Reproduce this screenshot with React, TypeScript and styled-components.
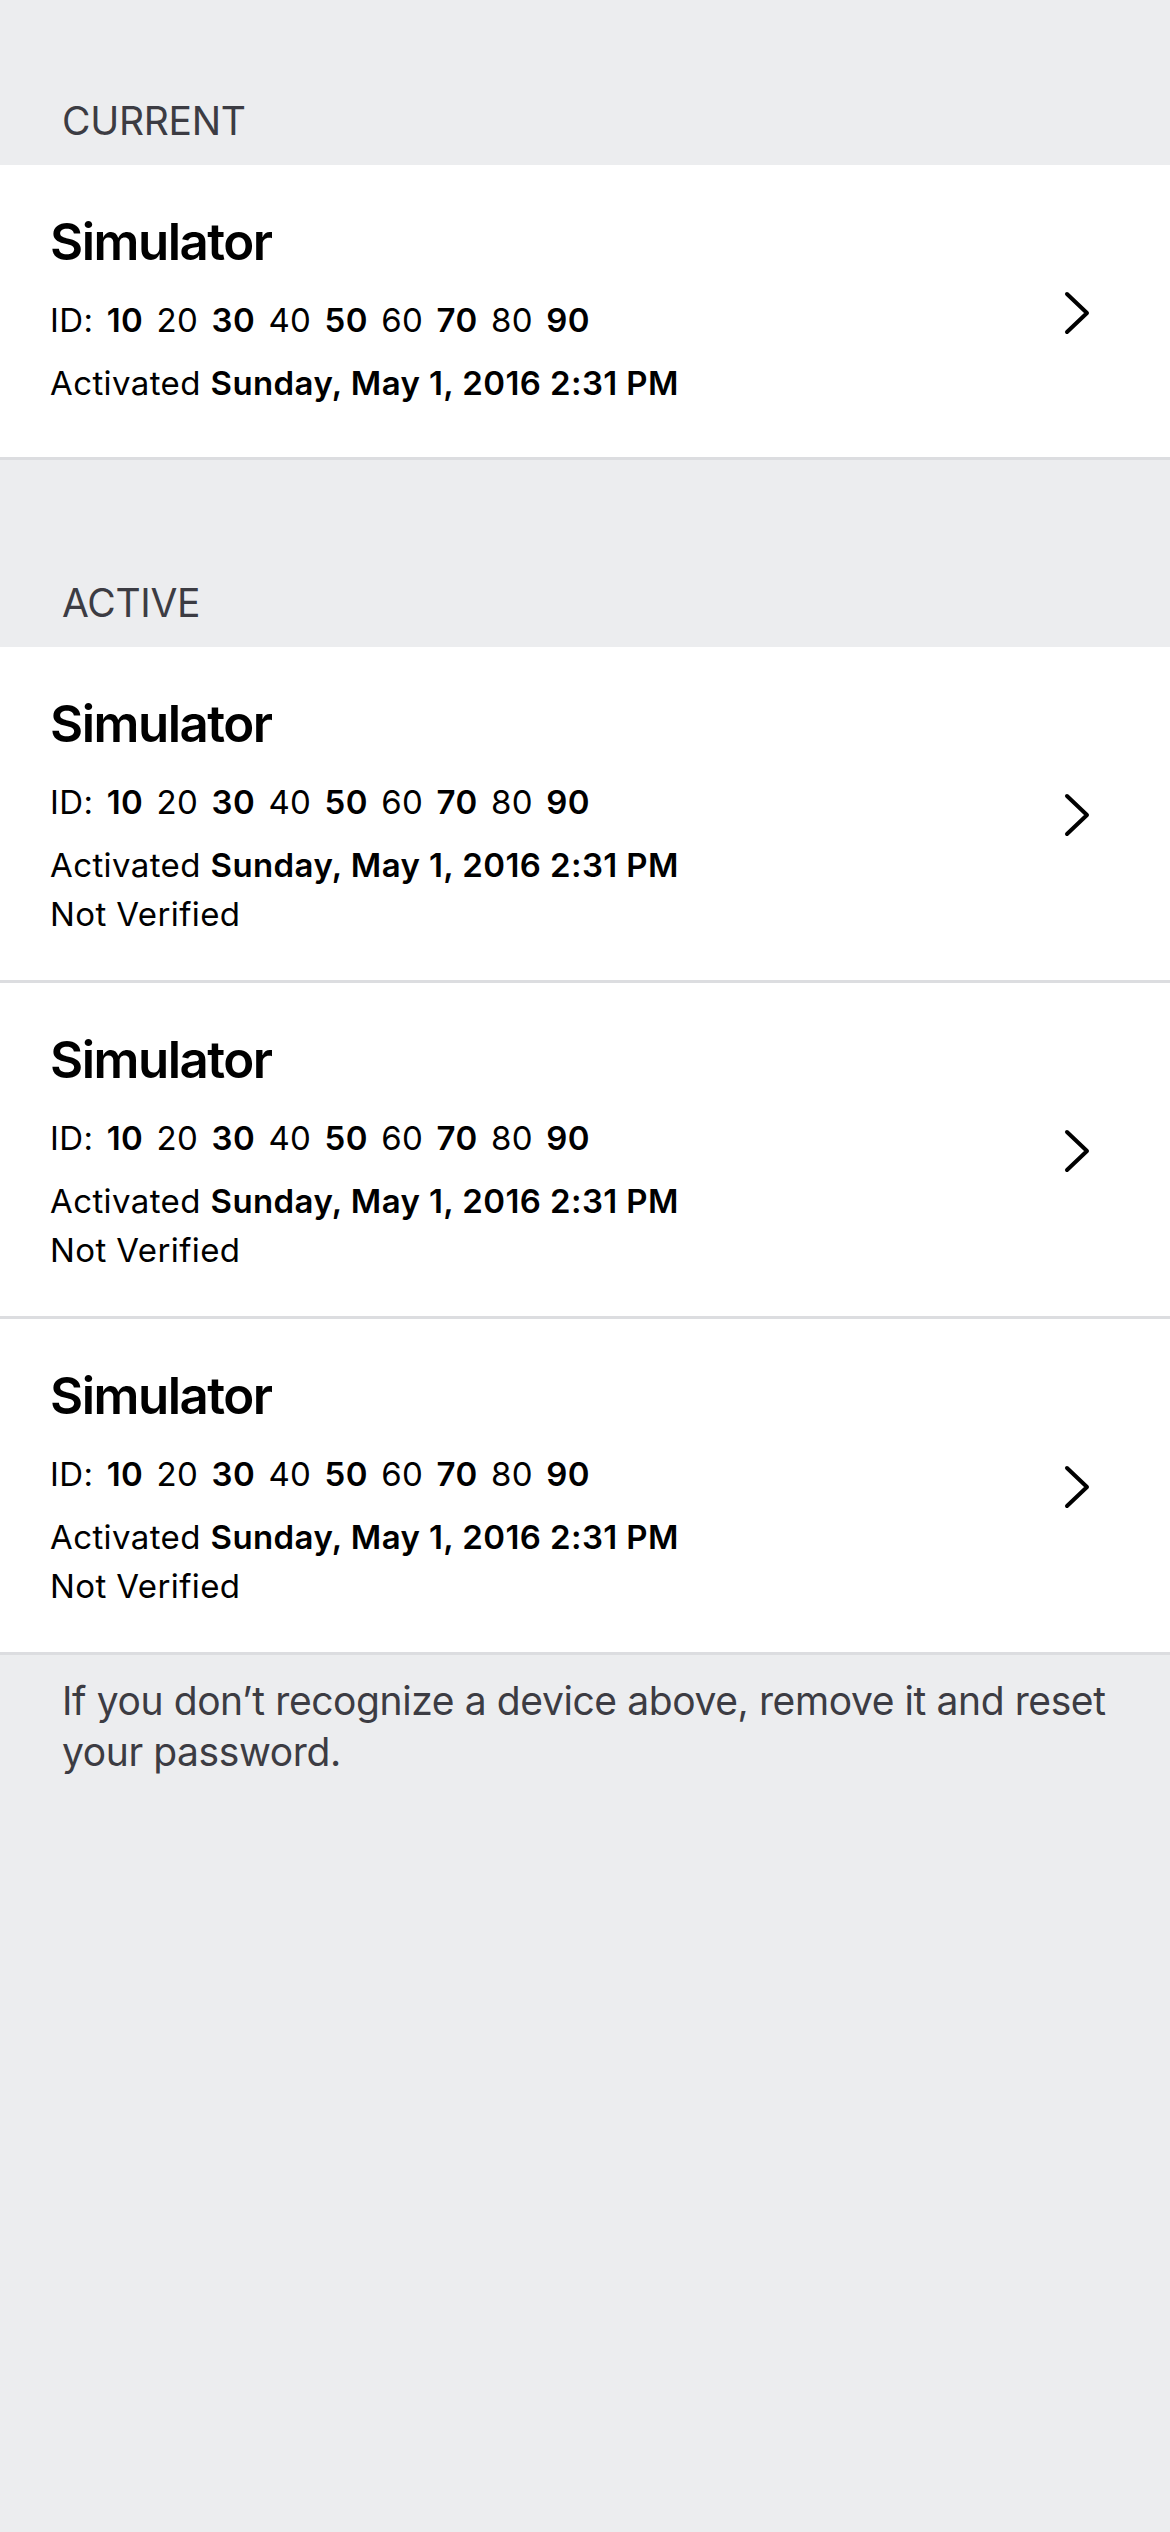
import React from "react";
import styled, { createGlobalStyle } from "styled-components";

const GlobalStyle = createGlobalStyle`
  html, body {
    margin: 0;
    padding: 0;
    background: #ecedef;
  }
  body {
    font-family: Inter, "Noto Sans", "Liberation Sans", sans-serif;
    -webkit-font-smoothing: antialiased;
  }
`;

const Page = styled.div`
  min-height: 2532px;
  width: 1170px;
  background: #ecedef;
  display: flex;
  flex-direction: column;
`;

const SectionHeader = styled.div<{ $top: number }>`
  padding: ${(p) => p.$top}px 62px 21px;
  font-size: 39px;
  line-height: 46px;
  font-weight: 400;
  letter-spacing: -0.3px;
  color: #3c3c43;
  text-transform: uppercase;
`;

const Card = styled.div`
  background: #ffffff;
  display: flex;
  align-items: center;
  padding: 0 80px 0 50px;
  border-bottom: 3px solid #dcdde0;
`;

const Info = styled.div<{ $bottom: number }>`
  flex: 1;
  display: flex;
  flex-direction: column;
  padding: 46px 0 ${(p) => p.$bottom}px;
`;

const Title = styled.div`
  font-size: 51px;
  line-height: 61px;
  font-weight: 600;
  letter-spacing: -1.5px;
  color: #000;
  margin-bottom: 28px;
`;

const Line = styled.div<{ $gap: number; $wide?: boolean }>`
  font-size: 33px;
  line-height: 40px;
  font-weight: 400;
  letter-spacing: 0.4px;
  word-spacing: ${(p) => (p.$wide ? "3.6px" : "0")};
  color: #000;
  margin-top: ${(p) => p.$gap}px;
  white-space: nowrap;
`;

const Strong = styled.span`
  font-weight: 600;
`;

const Chevron = styled.svg`
  width: 26px;
  height: 44px;
  margin-top: 3px;
  flex-shrink: 0;
`;

const Footer = styled.p`
  margin: 0;
  padding: 20px 40px 0 62px;
  font-size: 39px;
  line-height: 51px;
  font-weight: 400;
  letter-spacing: -0.4px;
  color: #3c3c43;
`;

const ids = [10, 20, 30, 40, 50, 60, 70, 80, 90];

function Device({ verified }: { verified?: boolean }) {
  return (
    <Card>
      <Info $bottom={verified ? 54 : 46}>
        <Title>Simulator</Title>
        <Line $gap={0} $wide>
          ID:
          {ids.map((n, i) =>
            i % 2 === 0 ? (
              <React.Fragment key={n}>
                {" "}
                <Strong>{n}</Strong>
              </React.Fragment>
            ) : (
              <React.Fragment key={n}> {n}</React.Fragment>
            )
          )}
        </Line>
        <Line $gap={23}>
          Activated <Strong>Sunday, May 1, 2016 2:31 PM</Strong>
        </Line>
        {!verified && <Line $gap={9}>Not Verified</Line>}
      </Info>
      <Chevron viewBox="0 0 26 44">
        <polyline
          points="3,3 23,22 3,41"
          fill="none"
          stroke="#000"
          strokeWidth="4"
          strokeLinecap="round"
          strokeLinejoin="round"
        />
      </Chevron>
    </Card>
  );
}

export default function App() {
  return (
    <>
      <GlobalStyle />
      <Page>
        <SectionHeader $top={98}>Current</SectionHeader>
        <Device verified />
        <SectionHeader $top={120}>Active</SectionHeader>
        <Device />
        <Device />
        <Device />
        <Footer>
          If you don’t recognize a device above, remove it and reset your
          password.
        </Footer>
      </Page>
    </>
  );
}
